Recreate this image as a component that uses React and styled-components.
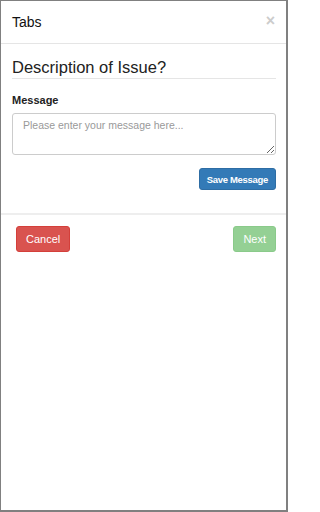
import styled, { createGlobalStyle } from "styled-components"

const GlobalStyle = createGlobalStyle`
    html, body {
        margin: 0;
        padding: 0;
        background: #fff;
    }
    * {
        box-sizing: border-box;
    }
`;

const Modal = styled.div`
    width: 288px;
    height: 512px;
    border: 1px solid #808080;
    border-right-width: 2px;
    border-bottom-width: 2px;
    background: #fff;
    font-family: "Liberation Sans", Arial, sans-serif;
    color: #333;
    display: flex;
    flex-direction: column;
`;

const Header = styled.div`
    height: 43px;
    padding: 0 11px 0 11px;
    border-bottom: 1px solid #e5e5e5;
    display: flex;
    align-items: center;
    justify-content: space-between;
`;

const Title = styled.h4`
    margin: 0;
    font-size: 14px;
    font-weight: 400;
    color: #111;
`;

const Close = styled.button`
    border: none;
    background: none;
    padding: 0;
    margin-top: -2px;
    font-family: "Liberation Sans", Arial, sans-serif;
    font-size: 16px;
    font-weight: 700;
    line-height: 1;
    color: #ccc;
    cursor: pointer;
`;

const Body = styled.div`
    padding: 13px 10px 23px 11px;
    display: flex;
    flex-direction: column;
`;

const Legend = styled.div`
    font-size: 16.5px;
    line-height: 20px;
    color: #222;
    padding-bottom: 1px;
    border-bottom: 1px solid #e5e5e5;
`;

const Label = styled.label`
    margin-top: 15px;
    font-size: 11px;
    line-height: 13px;
    font-weight: 700;
    color: #222;
`;

const TextArea = styled.textarea`
    margin-top: 6px;
    width: 100%;
    height: 42px;
    padding: 4px 10px;
    border: 1px solid #ccc;
    border-radius: 3px;
    font-family: "Liberation Sans", Arial, sans-serif;
    font-size: 10.5px;
    line-height: 15px;
    color: #555;
    resize: vertical;

    &::placeholder {
        color: #999;
    }
`;

const Actions = styled.div`
    margin-top: ${props => props.$spread ? "0" : "13px"};
    display: flex;
    justify-content: ${props => props.$spread ? "space-between" : "flex-end"};
`;

const colors = {
    primary: { bg: "#337ab7", border: "#2e6da4" },
    danger: { bg: "#d9534f", border: "#d43f3a" },
    success: { bg: "#5cb85c", border: "#4cae4c" },
};

const Button = styled.button`
    height: ${props => props.$small ? "22px" : "26px"};
    padding: 0 ${props => props.$small ? "7px" : "9px"};
    border: 1px solid ${props => colors[props.$kind].border};
    border-radius: 3px;
    background-color: ${props => colors[props.$kind].bg};
    color: #fff;
    font-family: "Liberation Sans", Arial, sans-serif;
    font-size: ${props => props.$small ? "9.5px" : "11px"};
    font-weight: ${props => props.$small ? 700 : 400};
    letter-spacing: ${props => props.$small ? "-0.3px" : "0"};
    opacity: ${props => props.disabled ? 0.65 : 1};
    cursor: ${props => props.disabled ? "not-allowed" : "pointer"};
`;

const Footer = styled.div`
    border-top: 2px solid #eee;
    padding: 11px 10px 0 15px;
`;

const App = () => {
  return (
    <>
      <GlobalStyle />
      <Modal>
        <Header>
          <Title>Tabs</Title>
          <Close aria-label="Close">×</Close>
        </Header>
        <Body>
          <Legend>Description of Issue?</Legend>
          <Label htmlFor="message">Message</Label>
          <TextArea id="message" placeholder="Please enter your message here..." />
          <Actions>
            <Button $kind="primary" $small>Save Message</Button>
          </Actions>
        </Body>
        <Footer>
          <Actions $spread>
            <Button $kind="danger">Cancel</Button>
            <Button $kind="success" disabled>Next</Button>
          </Actions>
        </Footer>
      </Modal>
    </>
  )
}

export default App
